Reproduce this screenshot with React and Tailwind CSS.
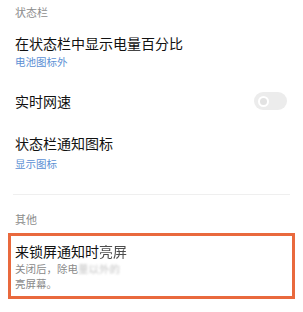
const font = { fontFamily: '"Noto Sans CJK SC", "Noto Sans", sans-serif' };

function SectionTitle({ children, className = "" }) {
  return (
    <div className={`px-[15px] flex items-center text-[11px] text-[#8c8c8c] ${className}`}>
      {children}
    </div>
  );
}

function Toggle() {
  return (
    <div className="w-[33px] h-[18px] rounded-full bg-[#ececec] flex items-center px-[4px]">
      <div className="w-[11px] h-[11px] rounded-full border-[2.5px] border-white bg-[#e2e2e2]" />
    </div>
  );
}

export default function App() {
  return (
    <div className="w-[303px] h-[312px] bg-white overflow-hidden" style={font}>
      <SectionTitle className="h-[24px]">状态栏</SectionTitle>

      {/* 电量百分比 */}
      <div className="px-[15px] pt-[9px] h-[56px]">
        <div className="text-[14px] leading-[20px] text-[#111]">在状态栏中显示电量百分比</div>
        <div className="mt-[2px] text-[10.5px] leading-[14px] text-[#5b8fd4]">电池图标外</div>
      </div>

      {/* 实时网速 */}
      <div className="px-[15px] h-[42px] flex items-center justify-between">
        <div className="text-[14px] leading-[20px] text-[#111]">实时网速</div>
        <div className="mr-[1px]">
          <Toggle />
        </div>
      </div>

      {/* 通知图标 */}
      <div className="px-[15px] pt-[11px] h-[72px]">
        <div className="text-[14px] leading-[20px] text-[#111]">状态栏通知图标</div>
        <div className="mt-[4px] text-[10.5px] leading-[14px] text-[#5b8fd4]">显示图标</div>
      </div>

      <div className="mx-[13px] h-px bg-[#efefef]" />

      <SectionTitle className="h-[24px] mt-[12px]">其他</SectionTitle>

      <div className="mx-[8px] mt-[2px] h-[66px] border-[3px] border-[#e9693d] px-[4px] pt-[5px]">
        <div className="text-[14px] leading-[20px] text-[#111]">
          来锁屏通知时<span className="blur-[0.7px] opacity-75">亮屏</span>
        </div>
        <div className="text-[10.5px] leading-[15px] text-[#8a8a8a]">
          关闭后，除电<span className="blur-[1.2px] opacity-50">量以外的</span>
        </div>
        <div className="text-[10.5px] leading-[15px] text-[#8a8a8a]">亮屏幕。</div>
      </div>
    </div>
  );
}
